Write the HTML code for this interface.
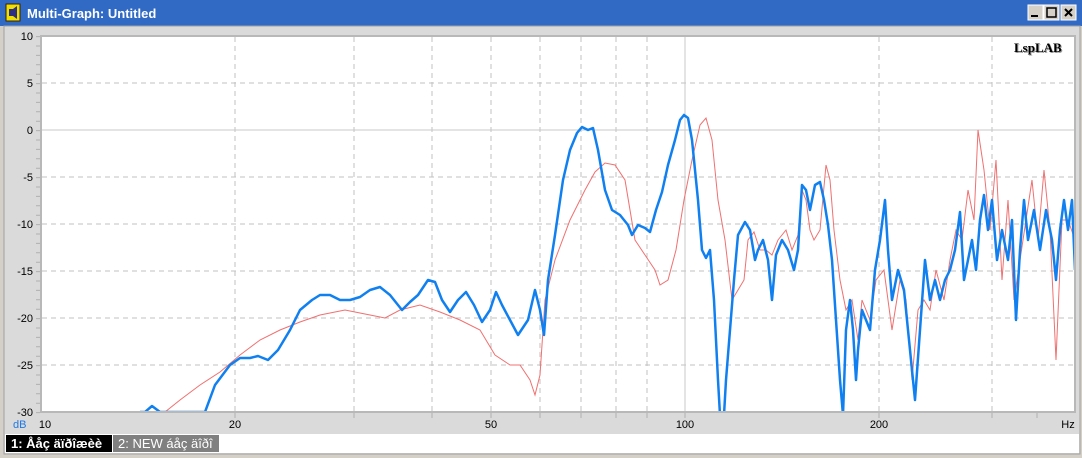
<html><head><style>body{margin:0;width:1082px;height:458px;overflow:hidden;background:#d4d0c8;font-family:"Liberation Sans",sans-serif}</style></head><body>
<svg width="1082" height="458" xmlns="http://www.w3.org/2000/svg" font-family="Liberation Sans, sans-serif">
<rect x="0" y="0" width="1082" height="458" fill="#d4d0c8"/>
<rect x="0" y="0" width="1082" height="26" fill="#316ac5"/>
<rect x="6" y="4" width="14" height="17" fill="#f0e000" stroke="#402000"/>
<path d="M9 9h4v7h-4z M13 9l4-3v13l-4-3z" fill="#303080"/>
<text x="27" y="18" fill="#fff" font-size="13" font-weight="bold">Multi-Graph: Untitled</text>
<g fill="#d4d0c8" stroke="#fff"><rect x="1028" y="5" width="15" height="15"/><rect x="1044" y="5" width="15" height="15"/><rect x="1061" y="5" width="15" height="15"/></g>
<path d="M1031 16h7" stroke="#000" stroke-width="2"/><rect x="1047" y="8" width="9" height="9" fill="none" stroke="#000" stroke-width="1.5"/><path d="M1065 9l7 7M1072 9l-7 7" stroke="#000" stroke-width="2"/>
<rect x="4" y="26" width="1076" height="428" fill="#dadada" stroke="#a0a0a0"/>
<rect x="41" y="36" width="1034" height="376" fill="#fff" stroke="#b8b8b8" stroke-width="2"/>
<g stroke="#b0b0b0" id="yt">
<path d="M36 36.6h4M36 46h4M36 55.4h4M36 64.8h4M36 74.2h4M36 83.6h4M36 93h4M36 102.4h4M36 111.8h4M36 121.2h4M36 130.6h4M36 140h4M36 149.4h4M36 158.8h4M36 168.2h4M36 177.6h4M36 187h4M36 196.4h4M36 205.8h4M36 215.2h4M36 224.6h4M36 234h4M36 243.4h4M36 252.8h4M36 262.2h4M36 271.6h4M36 281h4M36 290.4h4M36 299.8h4M36 309.2h4M36 318.6h4M36 328h4M36 337.4h4M36 346.8h4M36 356.2h4M36 365.6h4M36 375h4M36 384.4h4M36 393.8h4M36 403.2h4M36 412.6h4"/>
<path d="M235 413v5M354 413v5M432 413v5M491 413v5M540 413v5M581 413v5M616 413v5M647 413v5M685 413v5M879 413v5M992 413v5M1037 413v5"/>
</g>
<g stroke="#c0c0c0" stroke-dasharray="5,4">
<path d="M235 37V411M354 37V411M432 37V411M491 37V411M540 37V411M581 37V411M616 37V411M647 37V411M685 37V411M879 37V411M992 37V411"/>
<path d="M42 83H1074M42 177H1074M42 224H1074M42 271H1074M42 318H1074M42 365H1074"/>
</g>
<path d="M685 37V411M42 130H1074" stroke="#c8c8c8"/>
<g font-size="11" fill="#000" text-anchor="end"><text x="33" y="40">10</text><text x="33" y="87">5</text><text x="33" y="134">0</text><text x="33" y="181">-5</text><text x="33" y="228">-10</text><text x="33" y="275">-15</text><text x="33" y="322">-20</text><text x="33" y="369">-25</text><text x="33" y="416">-30</text></g>
<g font-size="11" fill="#000" text-anchor="middle"><text x="45" y="428">10</text><text x="235" y="428">20</text><text x="491" y="428">50</text><text x="685" y="428">100</text><text x="879" y="428">200</text><text x="1068" y="428">Hz</text></g>
<text x="13" y="428" font-size="11" fill="#1e78e6">dB</text>
<text x="1015" y="53" font-family="Liberation Serif" font-size="13" font-weight="bold" fill="#999">LspLAB</text>
<text x="1014" y="52" font-family="Liberation Serif" font-size="13" font-weight="bold" fill="#000">LspLAB</text>
<svg x="42" y="37" width="1032" height="374" viewBox="42 37 1032 374">
<polyline fill="none" stroke="#f07070" stroke-width="1" points="165,412 180,400 200,385 220,372 240,355 260,340 280,330 300,322 320,315 345,310 365,314 385,318 400,310 420,305 440,312 460,320 480,330 495,355 510,365 520,365 530,380 535,395 540,375 545,300 555,260 570,220 585,190 595,172 605,163 615,165 625,180 635,240 645,255 655,270 660,285 668,280 676,250 684,200 692,160 700,125 706,118 712,140 718,200 725,240 732,300 738,290 744,280 748,240 754,232 760,250 766,250 772,255 778,240 786,230 792,250 798,235 802,190 806,200 810,230 814,240 820,230 826,165 830,180 834,230 840,280 846,310 852,300 858,340 862,300 870,320 876,280 884,270 892,330 900,280 906,300 912,380 918,310 924,300 930,310 936,270 944,300 950,260 956,230 962,240 968,190 974,220 978,130 984,170 990,230 996,160 1002,280 1008,200 1014,300 1020,260 1026,220 1032,180 1038,240 1044,170 1050,230 1056,360 1062,220 1068,220 1075,240"/>
<polyline fill="none" stroke="#1080f0" stroke-width="2.5" stroke-linejoin="round" points="140,412 145,412 152,406 160,412 205,412 215,385 230,365 240,358 250,358 258,356 268,360 278,350 290,330 300,310 312,300 320,295 330,295 340,300 350,300 360,297 370,290 380,287 390,295 402,310 410,302 418,295 428,280 435,282 442,300 450,312 458,300 466,292 474,305 482,322 490,310 496,292 502,305 510,320 518,335 528,320 535,290 540,310 544,335 548,280 555,235 563,180 570,150 577,133 582,127 588,130 593,128 598,150 605,190 612,210 620,215 628,225 632,235 638,225 645,228 650,232 656,210 662,192 668,165 675,140 680,120 684,115 688,118 692,140 698,200 702,250 706,258 710,250 714,300 718,380 720,415 724,415 726,380 730,330 734,280 738,235 745,222 750,230 755,260 758,250 763,240 768,260 772,300 776,255 782,240 788,250 794,270 798,250 802,185 806,190 810,210 815,185 820,182 824,200 828,225 832,260 836,320 840,380 843,415 846,330 850,300 853,330 856,380 858,350 862,310 866,320 870,330 875,270 880,240 885,200 888,250 892,300 898,270 904,290 910,350 915,400 920,330 925,260 930,300 935,280 940,300 945,280 950,270 955,250 960,212 964,280 968,260 972,240 976,270 980,220 984,195 988,230 992,200 997,260 1002,230 1008,260 1012,220 1016,320 1020,250 1024,200 1028,240 1034,210 1040,250 1046,210 1052,240 1056,280 1060,230 1064,200 1068,230 1072,200 1075,270"/>
</svg>
<rect x="5" y="434" width="1074" height="19" fill="#fff"/>
<rect x="6" y="435" width="106" height="17" fill="#000"/>
<text x="11" y="448" font-size="13" font-weight="bold" fill="#fff">1: Ååç äïðîæèè</text>
<rect x="113" y="435" width="106" height="17" fill="#808080"/>
<text x="118" y="448" font-size="13" fill="#fff">2: NEW áåç äîðî</text>
</svg>
</body></html>
